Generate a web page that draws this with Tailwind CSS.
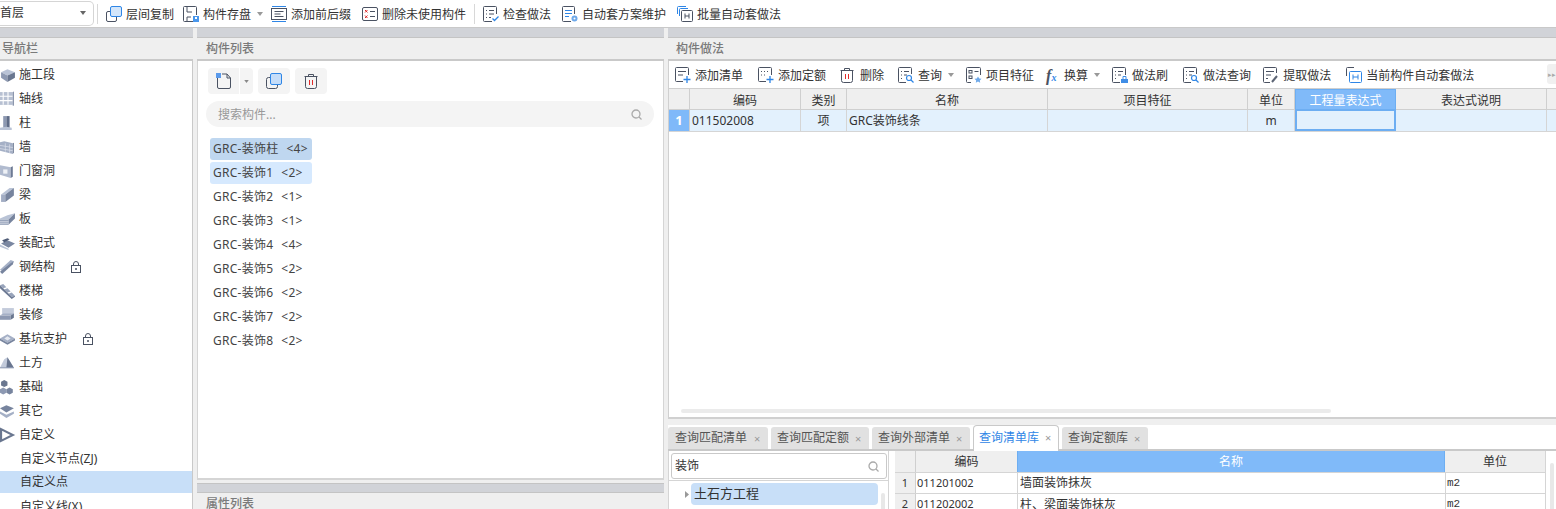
<!DOCTYPE html>
<html lang="zh-CN">
<head>
<meta charset="UTF-8">
<title>构件做法</title>
<script src="https://cdn.jsdelivr.net/npm/@tailwindcss/browser@4"></script>
</head>
<body class="bg-[#efefef] text-[#333] text-[12px] overflow-hidden [font-family:'Noto_Sans','Noto_Sans_CJK_SC',sans-serif]">
<div class="w-[1556px] h-[509px] flex flex-col overflow-hidden">

  <!-- top toolbar -->
  <div class="h-[28px] shrink-0 bg-white flex items-center border-b border-[#c9c9c9] [&>span]:translate-y-px">
    <div class="w-[94px] h-[25px] -mt-px border border-l-0 border-[#d5d5d5] rounded-r-[5px] flex items-center justify-between pr-[7px]">
      <span>首层</span>
      <svg class="w-[6px] h-[4px]" viewBox="0 0 6 4"><path d="M0 0h6L3 4z" fill="#666"/></svg>
    </div>
    <div class="w-px h-[20px] bg-[#d8d8d8] ml-[3px] mr-[8px]"></div>

    <svg class="w-[16px] h-[16px] mr-[4px]" viewBox="0 0 16 16" fill="none"><rect x="0.5" y="5.5" width="10" height="10" rx="1.5" stroke="#4a5262"/><rect x="4.5" y="0.5" width="11" height="10" rx="1.5" fill="#d3e6fb" stroke="#2f86e6"/></svg>
    <span class="mr-[9px]">层间复制</span>
    <svg class="w-[16px] h-[16px] mr-[4px]" viewBox="0 0 16 16" fill="none"><path d="M11 15.500H1.500a1 1 0 0 1-1-1v-13a1 1 0 0 1 1-1h11a1 1 0 0 1 1 1V9" stroke="#4a5262"/><path d="M4 1v5h5M4 15v-4h4" stroke="#4a5262"/><rect x="10" y="10" width="6" height="6" fill="#4a97ec"/><rect x="12" y="11" width="2" height="2" fill="#fff"/></svg>
    <span>构件存盘</span>
    <svg class="w-[6px] h-[4px] ml-[6px] mr-[8px]" viewBox="0 0 6 4"><path d="M0 0h6L3 4z" fill="#999"/></svg>
    <svg class="w-[16px] h-[16px] mr-[4px]" viewBox="0 0 16 16" fill="none"><path d="M1 .5h14M1 15.500h14" stroke="#2f86e6"/><rect x="0.5" y="2.500" width="15" height="11" stroke="#4a5262"/><path d="M3.500 5.500h9M3.500 8h6M3.500 10.500h9" stroke="#4a5262"/></svg>
    <span class="mr-[11px]">添加前后缀</span>
    <svg class="w-[16px] h-[16px] mr-[4px]" viewBox="0 0 16 16" fill="none"><rect x="0.5" y="1.500" width="15" height="13" rx="1.500" stroke="#4a5262"/><path d="M3 4l2.500 2.500M5.500 4L3 6.500M3 9.500l2.500 2.500M5.500 9.500L3 12" stroke="#e02b2b"/><path d="M8 5.500h5M8 10.500h5" stroke="#4a5262"/></svg>
    <span>删除未使用构件</span>
    <div class="w-px h-[20px] bg-[#d8d8d8] ml-[8px] mr-[8px]"></div>

    <svg class="w-[16px] h-[16px] mr-[4px]" viewBox="0 0 16 16" fill="none"><path d="M9 15.500H1.500a1 1 0 0 1-1-1v-13a1 1 0 0 1 1-1h11a1 1 0 0 1 1 1V8" stroke="#4a5262"/><path d="M3 4.500h1M6 4.500h5M3 8h1M6 8h5M3 11.500h1M6 11.500h2" stroke="#4a5262"/><path d="M9.500 12.500l2 2 4-4" stroke="#2f86e6" stroke-width="1.300"/></svg>
    <span class="mr-[11px]">检查做法</span>
    <svg class="w-[16px] h-[16px] mr-[4px]" viewBox="0 0 16 16" fill="none"><path d="M9 15.500H1.500a1 1 0 0 1-1-1v-13a1 1 0 0 1 1-1h10a1 1 0 0 1 1 1V8" stroke="#4a5262"/><path d="M3 4.500h7M3 7.500h7M3 10.500h4" stroke="#2f86e6"/><circle cx="12.500" cy="12.500" r="3" fill="#6ea9ea"/><circle cx="12.500" cy="12.500" r="1" fill="#fff"/></svg>
    <span class="mr-[11px]">自动套方案维护</span>
    <svg class="w-[16px] h-[16px] mr-[4px]" viewBox="0 0 16 16" fill="none"><path d="M.5 8V1.500a1 1 0 0 1 1-1H9M2.500 10V3.500a1 1 0 0 1 1-1H11" stroke="#2f86e6"/><rect x="4.500" y="4.500" width="11" height="11" rx="1" stroke="#4a5262"/><path d="M8 7.500v5M12 7.500v5M8 10h4" stroke="#4a5262"/></svg>
    <span>批量自动套做法</span>
  </div>

  <div class="flex-1 flex min-h-0">

    <!-- nav -->
    <div class="w-[193px] shrink-0 flex flex-col min-h-0">
      <div class="h-[10px] shrink-0 bg-[#d1d3d8] border-b border-[#c4c4c4]"></div>
      <div class="h-[23px] shrink-0 bg-[#efefef] border-b-2 border-[#c9c9c9] flex items-center pl-[2px] text-[#7a7a7a] font-medium">导航栏</div>
      <div class="flex-1 min-h-0 overflow-hidden bg-white border-r border-[#c9c9c9] pt-px">
        <div class="h-6 pt-[2px] flex items-center gap-[3px]"><svg class="w-[16px] h-[16px] shrink-0" viewBox="0 0 15 15"><path d="M1 5l6-3 7 3-7 3z" fill="#b9c3d6"/><path d="M1 5v5l6 4V8z" fill="#8d99b2"/><path d="M14 5v5l-7 4V8z" fill="#69768f"/></svg>施工段</div>
        <div class="h-6 pt-[2px] flex items-center gap-[3px]"><svg class="w-[16px] h-[16px] shrink-0" viewBox="0 0 15 15"><rect x="-1" y="1" width="13" height="12" fill="#b7c0d2"/><path d="M3 1v12M7.500 1v12M-1 5h13M-1 9h13" stroke="#fff"/><path d="M12 1l1-.5v13l-1 .5z" fill="#7a87a1"/></svg>轴线</div>
        <div class="h-6 pt-[2px] flex items-center gap-[3px]"><svg class="w-[16px] h-[16px] shrink-0" viewBox="0 0 15 15"><path d="M3 1h3v11H3z" fill="#8d99b2"/><path d="M6 1h3v11H6z" fill="#5f6c87"/><path d="M0 12l6-1 5 1v2H0z" fill="#b9c3d6"/></svg>柱</div>
        <div class="h-6 pt-[2px] flex items-center gap-[3px]"><svg class="w-[16px] h-[16px] shrink-0" viewBox="0 0 15 15"><path d="M0 3l4-1 8 2v10L0 11z" fill="#a5b0c6"/><path d="M12 4l1-.5V13l-1 1z" fill="#6d7a94"/><path d="M0 6l12 2M0 9l12 2M5 4v8M9 5v8" stroke="#d9deea" stroke-width=".7"/></svg>墙</div>
        <div class="h-6 pt-[2px] flex items-center gap-[3px]"><svg class="w-[16px] h-[16px] shrink-0" viewBox="0 0 15 15"><path d="M0 2l10 2v10L0 11z" fill="#b1bbcf"/><path d="M10 4l2-1v10l-2 1z" fill="#6d7a94"/><rect x="3" y="6" width="4" height="4" fill="#eef1f6"/></svg>门窗洞</div>
        <div class="h-6 pt-[2px] flex items-center gap-[3px]"><svg class="w-[16px] h-[16px] shrink-0" viewBox="0 0 15 15"><path d="M1 7l8-6h4L5 7z" fill="#b9c3d6"/><path d="M1 7h4v7H1z" fill="#a2adc4"/><path d="M5 7l8-6v7l-8 6z" fill="#77849e"/></svg>梁</div>
        <div class="h-6 pt-[2px] flex items-center gap-[3px]"><svg class="w-[16px] h-[16px] shrink-0" viewBox="0 0 15 15"><path d="M0 7l7-3 7-2-6 6H0z" fill="#b9c3d6"/><path d="M0 8h8v5H0z" fill="#98a4bb"/><path d="M8 8l6-6v5l-6 6z" fill="#77849e"/><path d="M0 10h8M0 11.500h8" stroke="#e4e8f0" stroke-width=".6"/></svg>板</div>
        <div class="h-6 pt-[2px] flex items-center gap-[3px]"><svg class="w-[16px] h-[16px] shrink-0" viewBox="0 0 15 15"><path d="M1 8l6-3 7 3-6 4z" fill="#7a87a1"/><path d="M2 5l5-2 2 1-5 3z" fill="#4f5c77"/><path d="M0 9l8 4v1L0 11z" fill="#b9c3d6"/></svg>装配式</div>
        <div class="h-6 pt-[2px] flex items-center gap-[3px]"><svg class="w-[16px] h-[16px] shrink-0" viewBox="0 0 15 15"><path d="M0 10l10-9 3 1L3 12z" fill="#a5b0c6"/><path d="M0 12l10-8 3-2-1 3L2 14z" fill="#77849e"/></svg>钢结构<svg class="w-[10px] h-[12px] ml-[13px]" viewBox="0 0 10 12" fill="none"><rect x=".5" y="4.500" width="9" height="7" stroke="#4a5262"/><path d="M2.500 4.500V3a2.500 2.500 0 0 1 5 0v1.500" stroke="#4a5262"/><circle cx="5" cy="8" r="1" fill="#4a5262"/></svg></div>
        <div class="h-6 pt-[2px] flex items-center gap-[3px]"><svg class="w-[16px] h-[16px] shrink-0" viewBox="0 0 15 15"><path d="M0 2l3-1 3 3-3 1zM4 6l3-1 3 3-3 1zM8 10l3-1 3 3-3 1z" fill="#98a4bb"/><path d="M0 2v3l11 10 3-2v-1l-3 1-8-8z" fill="#6d7a94"/></svg>楼梯</div>
        <div class="h-6 pt-[2px] flex items-center gap-[3px]"><svg class="w-[16px] h-[16px] shrink-0" viewBox="0 0 15 15"><path d="M2 1h11v6H2z" fill="#c3cbdb"/><path d="M0 8l3-2h10l-3 2z" fill="#a5b0c6"/><path d="M0 8h10v4H0z" fill="#8d99b2"/><path d="M10 8l3-2v4l-3 2z" fill="#69768f"/></svg>装修</div>
        <div class="h-6 pt-[2px] flex items-center gap-[3px]"><svg class="w-[16px] h-[16px] shrink-0" viewBox="0 0 15 15"><path d="M0 7l7-4 7 4-7 4z" fill="#a5b0c6"/><path d="M0 7v2l7 4V11zM14 7v2l-7 4V11z" fill="#77849e"/><path d="M4 7l3-2 3 2-3 2z" fill="#e4e8f0"/></svg>基坑支护<svg class="w-[10px] h-[12px] ml-[13px]" viewBox="0 0 10 12" fill="none"><rect x=".5" y="4.500" width="9" height="7" stroke="#4a5262"/><path d="M2.500 4.500V3a2.500 2.500 0 0 1 5 0v1.500" stroke="#4a5262"/><circle cx="5" cy="8" r="1" fill="#4a5262"/></svg></div>
        <div class="h-6 pt-[2px] flex items-center gap-[3px]"><svg class="w-[16px] h-[16px] shrink-0" viewBox="0 0 15 15"><path d="M0 12l4-8 3-2 6 10z" fill="#c3cbdb"/><path d="M6 12l1-10 6 10z" fill="#69768f"/><path d="M0 12h13" stroke="#8d99b2"/></svg>土方</div>
        <div class="h-6 pt-[2px] flex items-center gap-[3px]"><svg class="w-[16px] h-[16px] shrink-0" viewBox="0 0 15 15"><path d="M4 1l3 1.500v3.500l-3 1.500-3-1.500V2.500z" fill="#69768f"/><path d="M3 8l3 1.500V13l-3 1.500L0 13V9.500z" fill="#8d99b2"/><path d="M9 8l3 1.500V13l-3 1.500L6 13V9.500z" fill="#77849e"/></svg>基础</div>
        <div class="h-6 pt-[2px] flex items-center gap-[3px]"><svg class="w-[16px] h-[16px] shrink-0" viewBox="0 0 15 15"><path d="M0 5l6-3 7 3-7 4z" fill="#77849e"/><path d="M0 8l6 3 7-3v2l-7 4-6-4z" fill="#a5b0c6"/></svg>其它</div>
        <div class="h-6 pt-[2px] flex items-center gap-[3px]"><svg class="w-[16px] h-[16px] shrink-0" viewBox="0 0 15 15" fill="none"><path d="M1 2l11 5.500L1 13z" stroke="#69768f" stroke-width="2"/></svg>自定义</div>
        <div class="h-6 pt-[2px] flex items-center pl-[20px]">自定义节点(ZJ)</div>
        <div class="h-[22px] mt-px bg-[#c8dff8] flex items-center pl-[20px]">自定义点</div>
        <div class="h-6 mt-px pt-[2px] flex items-center pl-[20px]">自定义线(X)</div>
      </div>
    </div>

    <div class="w-[4px] shrink-0"></div>

    <!-- component list -->
    <div class="w-[467px] shrink-0 flex flex-col min-h-0">
      <div class="h-[10px] shrink-0 bg-[#d1d3d8] border-b border-[#c4c4c4]"></div>
      <div class="h-[23px] shrink-0 bg-[#efefef] border-b-2 border-[#c9c9c9] flex items-center pl-[9px] text-[#7a7a7a] font-medium">构件列表</div>
      <div class="h-[419px] shrink-0 bg-white border-x border-b-2 border-[#d5d5d5] pl-[8px] pr-[9px] pt-[7px]">
        <div class="flex ml-[2px] gap-[5px]">
          <div class="flex h-[26px] w-[45px] bg-[#f4f4f4] rounded-[4px]">
            <div class="w-[32px] flex items-center justify-center border-r border-white">
              <svg class="w-[16px] h-[16px]" viewBox="0 0 16 16" fill="none"><path d="M1.500 5v9a1.500 1.500 0 0 0 1.500 1.500h10a1.500 1.500 0 0 0 1.500-1.500V5L11 1H6" stroke="#4a5262"/><path d="M11 1v4h3.500" stroke="#4a5262"/><rect x="0" y="0" width="5" height="5" fill="#5b9bec"/></svg>
            </div>
            <div class="flex-1 flex items-center justify-center"><svg class="w-[5px] h-[3px]" viewBox="0 0 6 4"><path d="M0 0h6L3 4z" fill="#888"/></svg></div>
          </div>
          <div class="h-[26px] w-[32px] bg-[#f4f4f4] rounded-[4px] flex items-center justify-center">
            <svg class="w-[16px] h-[16px]" viewBox="0 0 16 16" fill="none"><rect x=".5" y="4.500" width="11" height="11" rx="2" stroke="#4a5262"/><rect x="4.500" y=".5" width="11" height="11" rx="1.500" fill="#c5ddf9" stroke="#2f86e6"/></svg>
          </div>
          <div class="h-[26px] w-[32px] bg-[#f4f4f4] rounded-[4px] flex items-center justify-center">
            <svg class="w-[14px] h-[16px]" viewBox="0 0 14 16" fill="none"><path d="M.5 3.500h13M4.500 3.500V1.500h5v2" stroke="#4a5262"/><path d="M1.500 3.500v10a2 2 0 0 0 2 2h7a2 2 0 0 0 2-2v-10" stroke="#4a5262"/><path d="M5.500 7v5M8.500 7v5" stroke="#e02b2b"/></svg>
          </div>
        </div>
        <div class="mt-[7px] h-[26px] bg-[#f4f4f4] rounded-full flex items-center justify-between pl-[12px] pr-[12px] text-[#999]">
          <span class="translate-y-px">搜索构件...</span>
          <svg class="w-[11px] h-[11px]" viewBox="0 0 11 11" fill="none"><circle cx="5" cy="5" r="4" stroke="#aaa" stroke-width="1.300"/><path d="M8 8l2.500 2.500" stroke="#aaa" stroke-width="1.300"/></svg>
        </div>
        <div class="mt-[11px] ml-[4px] w-[102px] text-[#444] tracking-[0.25px]">
          <div class="h-[22px] mb-[2px] rounded-[3px] bg-[#bfd7f0] flex items-center pl-[3px] whitespace-nowrap">GRC-装饰柱<span class="ml-[8px]">&lt;4&gt;</span></div>
          <div class="h-[22px] mb-[2px] rounded-[3px] bg-[#d6e9fe] flex items-center pl-[3px] whitespace-nowrap">GRC-装饰1<span class="ml-[8px]">&lt;2&gt;</span></div>
          <div class="h-[22px] mb-[2px] flex items-center pl-[3px] whitespace-nowrap">GRC-装饰2<span class="ml-[8px]">&lt;1&gt;</span></div>
          <div class="h-[22px] mb-[2px] flex items-center pl-[3px] whitespace-nowrap">GRC-装饰3<span class="ml-[8px]">&lt;1&gt;</span></div>
          <div class="h-[22px] mb-[2px] flex items-center pl-[3px] whitespace-nowrap">GRC-装饰4<span class="ml-[8px]">&lt;4&gt;</span></div>
          <div class="h-[22px] mb-[2px] flex items-center pl-[3px] whitespace-nowrap">GRC-装饰5<span class="ml-[8px]">&lt;2&gt;</span></div>
          <div class="h-[22px] mb-[2px] flex items-center pl-[3px] whitespace-nowrap">GRC-装饰6<span class="ml-[8px]">&lt;2&gt;</span></div>
          <div class="h-[22px] mb-[2px] flex items-center pl-[3px] whitespace-nowrap">GRC-装饰7<span class="ml-[8px]">&lt;2&gt;</span></div>
          <div class="h-[22px] mb-[2px] flex items-center pl-[3px] whitespace-nowrap">GRC-装饰8<span class="ml-[8px]">&lt;2&gt;</span></div>
        </div>
      </div>
      <div class="h-[3px] shrink-0"></div>
      <div class="h-[10px] shrink-0 bg-[#d1d3d8] border-y border-[#c4c4c4]"></div>
      <div class="h-[22px] shrink-0 flex items-center pl-[9px] text-[#7a7a7a] font-medium">属性列表</div>
    </div>

    <div class="w-[4px] shrink-0"></div>

    <!-- right panel -->
    <div class="flex-1 flex flex-col min-w-0 min-h-0">
      <div class="h-[10px] shrink-0 bg-[#d1d3d8] border-b border-[#c4c4c4]"></div>
      <div class="h-[23px] shrink-0 bg-[#efefef] border-b-2 border-[#c9c9c9] flex items-center pl-[8px] text-[#7a7a7a] font-medium">构件做法</div>

      <div class="h-[358px] shrink-0 bg-white border-l border-b-2 border-[#d0d0d0] relative">
        <div class="h-[27px] flex items-center pl-[6px] relative [&>span]:translate-y-px">
          <svg class="w-[16px] h-[16px] mr-[4px]" viewBox="0 0 16 16" fill="none"><path d="M8 14.500H1.500a1 1 0 0 1-1-1v-12a1 1 0 0 1 1-1h11a1 1 0 0 1 1 1V8" stroke="#4a5262"/><path d="M3 4.500h8M3 8h5" stroke="#4a5262"/><path d="M12 9v7M8.500 12.500h7" stroke="#2f86e6" stroke-width="1.300"/></svg>
          <span class="mr-[15px]">添加清单</span>
          <svg class="w-[16px] h-[16px] mr-[4px]" viewBox="0 0 16 16" fill="none"><path d="M8 14.500H1.500a1 1 0 0 1-1-1v-12a1 1 0 0 1 1-1h11a1 1 0 0 1 1 1V8" stroke="#4a5262"/><path d="M3 4.500h1M6 4.500h1M9 4.500h1M3 8h1M6 8h1" stroke="#4a5262"/><path d="M12 9v7M8.500 12.500h7" stroke="#2f86e6" stroke-width="1.300"/></svg>
          <span class="mr-[14px]">添加定额</span>
          <svg class="w-[14px] h-[16px] mr-[6px]" viewBox="0 0 14 16" fill="none"><path d="M.5 3.500h13M4.500 3.500V1.500h5v2" stroke="#4a5262"/><path d="M1.500 3.500v10a2 2 0 0 0 2 2h7a2 2 0 0 0 2-2v-10" stroke="#4a5262"/><path d="M5.500 7v5M8.500 7v5" stroke="#e02b2b"/></svg>
          <span class="mr-[14px]">删除</span>
          <svg class="w-[16px] h-[16px] mr-[4px]" viewBox="0 0 16 16" fill="none"><path d="M8 15.500H1.500a1 1 0 0 1-1-1v-13a1 1 0 0 1 1-1h11a1 1 0 0 1 1 1V7" stroke="#4a5262"/><path d="M3 4.500h1M6 4.500h5M3 8h1M6 8h3M3 11.500h1" stroke="#4a5262"/><circle cx="11" cy="11" r="2.500" stroke="#2f86e6" stroke-width="1.200"/><path d="M13 13l2.500 2.500" stroke="#2f86e6" stroke-width="1.300"/></svg>
          <span>查询</span>
          <svg class="w-[6px] h-[4px] ml-[6px] mr-[12px]" viewBox="0 0 6 4"><path d="M0 0h6L3 4z" fill="#999"/></svg>
          <svg class="w-[16px] h-[16px] mr-[4px]" viewBox="0 0 16 16" fill="none"><path d="M5 15.500H1.500a1 1 0 0 1-1-1v-13a1 1 0 0 1 1-1h12a1 1 0 0 1 1 1V8" stroke="#4a5262"/><rect x="3" y="3.500" width="3" height="2.500" stroke="#4a5262"/><rect x="3" y="9" width="3" height="2.500" stroke="#4a5262"/><path d="M8.500 4.500h4" stroke="#4a5262"/><path d="M12 9.500l1.200 2 2.300.3-1.700 1.600.4 2.300-2.200-1.100-2.200 1.100.4-2.300-1.700-1.600 2.300-.3z" fill="#6ea9ea"/></svg>
          <span class="mr-[12px]">项目特征</span>
          <span class="w-[14px] mr-[4px] [font-family:'Liberation_Serif',serif] italic font-bold text-[16px] leading-none text-[#4a5262] whitespace-nowrap">f<span class="text-[10px] text-[#2f86e6]">x</span></span>
          <span>换算</span>
          <svg class="w-[6px] h-[4px] ml-[6px] mr-[12px]" viewBox="0 0 6 4"><path d="M0 0h6L3 4z" fill="#999"/></svg>
          <svg class="w-[16px] h-[16px] mr-[4px]" viewBox="0 0 16 16" fill="none"><path d="M8 15.500H1.500a1 1 0 0 1-1-1v-13a1 1 0 0 1 1-1h11a1 1 0 0 1 1 1V8" stroke="#4a5262"/><path d="M3 4.500h1M6 4.500h5M3 8h1M6 8h3M3 11.500h1" stroke="#4a5262"/><path d="M9 12h7v4H9z" fill="#3f8de6"/><path d="M11 12V9.500h3V12" stroke="#3f8de6"/></svg>
          <span class="mr-[15px]">做法刷</span>
          <svg class="w-[16px] h-[16px] mr-[4px]" viewBox="0 0 16 16" fill="none"><path d="M8 15.500H1.500a1 1 0 0 1-1-1v-13a1 1 0 0 1 1-1h11a1 1 0 0 1 1 1V7" stroke="#4a5262"/><path d="M3 4.500h1M6 4.500h5M3 8h1M6 8h3M3 11.500h1" stroke="#4a5262"/><circle cx="11" cy="11" r="2.500" stroke="#2f86e6" stroke-width="1.200"/><path d="M13 13l2.500 2.500" stroke="#2f86e6" stroke-width="1.300"/></svg>
          <span class="mr-[12px]">做法查询</span>
          <svg class="w-[16px] h-[16px] mr-[4px]" viewBox="0 0 16 16" fill="none"><path d="M7 15.500H1.500a1 1 0 0 1-1-1v-13a1 1 0 0 1 1-1h11a1 1 0 0 1 1 1V6" stroke="#4a5262"/><path d="M3 4.500h8M3 8h5M3 11.500h2" stroke="#4a5262"/><path d="M9 15l5-6" stroke="#5c6474" stroke-width="2"/></svg>
          <span class="mr-[15px]">提取做法</span>
          <svg class="w-[16px] h-[16px] mr-[4px]" viewBox="0 0 16 16" fill="none"><path d="M.5 9V1.500a1 1 0 0 1 1-1H8" stroke="#4a5262"/><rect x="3.500" y="4.500" width="12" height="11" rx="1" stroke="#2f86e6"/><path d="M7 7.500v5M12 7.500v5M7 10h5" stroke="#2f86e6"/></svg>
          <span>当前构件自动套做法</span>
          <div class="absolute right-0 top-[3px] w-[9px] h-[20px] rounded-l-[3px] bg-[#f0f0f0] flex items-center justify-center"><span class="text-[7px] text-[#aaa] leading-none">▸▸</span></div>
        </div>

        <div class="grid grid-cols-[21px_111px_46px_201px_200px_47px_101px_151px_1fr] h-[22px] bg-[#efefef] border-y border-[#cfcfcf] text-center [&>div]:pt-[2px]">
          <div class="border-r border-[#cfcfcf]"></div>
          <div class="border-r border-[#cfcfcf] flex items-center justify-center">编码</div>
          <div class="border-r border-[#cfcfcf] flex items-center justify-center">类别</div>
          <div class="border-r border-[#cfcfcf] flex items-center justify-center">名称</div>
          <div class="border-r border-[#cfcfcf] flex items-center justify-center">项目特征</div>
          <div class="border-r border-[#cfcfcf] flex items-center justify-center">单位</div>
          <div class="bg-[#80baf9] text-white border-x border-t border-[#6daef2] flex items-center justify-center">工程量表达式</div>
          <div class="border-r border-[#cfcfcf] flex items-center justify-center">表达式说明</div>
          <div></div>
        </div>
        <div class="grid grid-cols-[21px_111px_46px_201px_200px_47px_101px_151px_1fr] h-[22px] bg-[#e3f1fd] border-b border-[#d5d5d5]">
          <div class="bg-[#7fb9f9] text-white font-bold text-[13px] border-r border-[#cfcfcf] flex items-center justify-center">1</div>
          <div class="border-r border-[#d5d5d5] flex items-center pl-[2px]">011502008</div>
          <div class="border-r border-[#d5d5d5] flex items-center justify-center">项</div>
          <div class="border-r border-[#d5d5d5] flex items-center pl-[2px]">GRC装饰线条</div>
          <div class="border-r border-[#d5d5d5]"></div>
          <div class="border-r border-[#d5d5d5] flex items-center justify-center">m</div>
          <div class="border-2 border-[#6daef2] -mt-px"></div>
          <div class="border-r border-[#d5d5d5]"></div>
          <div></div>
        </div>
        <div class="absolute left-[12px] bottom-[4px] w-[650px] h-[4px] rounded-full bg-[#ebebeb]"></div>
      </div>

      <!-- tabs -->
      <div class="h-[32px] shrink-0 flex items-end bg-white border-b-2 border-[#c9c9c9] relative">
        <div class="absolute inset-x-0 top-0 h-[6px] bg-[#efefef]"></div>
        <div class="relative flex items-end gap-[3px] -mb-[2px]">
          <div class="w-[100px] h-[22px] mb-[2px] bg-[#e1e1e1] rounded-t-[3px] flex items-center pl-[7px] text-[#555]">查询匹配清单<span class="ml-[7px] text-[#999] text-[11px] leading-none">×</span></div>
          <div class="w-[98px] h-[22px] mb-[2px] bg-[#e1e1e1] rounded-t-[3px] flex items-center pl-[6px] text-[#555]">查询匹配定额<span class="ml-[6px] text-[#999] text-[11px] leading-none">×</span></div>
          <div class="w-[98px] h-[22px] mb-[2px] bg-[#e1e1e1] rounded-t-[3px] flex items-center pl-[6px] text-[#555]">查询外部清单<span class="ml-[6px] text-[#999] text-[11px] leading-none">×</span></div>
          <div class="w-[86px] h-[26px] bg-white border-x border-t border-[#c9c9c9] rounded-t-[4px] flex items-center pl-[5px] text-[#2f86e6] pb-[2px]">查询清单库<span class="ml-[6px] text-[#999] text-[11px] leading-none">×</span></div>
          <div class="w-[86px] h-[22px] mb-[2px] bg-[#e1e1e1] rounded-t-[3px] flex items-center pl-[6px] text-[#555]">查询定额库<span class="ml-[6px] text-[#999] text-[11px] leading-none">×</span></div>
        </div>
      </div>

      <!-- query library -->
      <div class="flex-1 flex bg-white min-h-0 relative overflow-hidden">
        <div class="w-[221px] shrink-0 border-x border-[#d5d5d5] relative">
          <div class="h-[26px] mt-[2px] ml-[2px] mr-px border border-[#c9c9c9] rounded-[3px] flex items-center justify-between pl-[3px] pr-[7px]">
            <span>装饰</span>
            <svg class="w-[11px] h-[11px]" viewBox="0 0 11 11" fill="none"><circle cx="5" cy="5" r="4" stroke="#aaa" stroke-width="1.300"/><path d="M8 8l2.500 2.500" stroke="#aaa" stroke-width="1.300"/></svg>
          </div>
          <div class="border-t border-[#d5d5d5] mt-px pt-[2px] pl-[16px] flex items-center">
            <svg class="w-[4px] h-[7px] mr-px" viewBox="0 0 4 7"><path d="M0 0l4 3.500L0 7z" fill="#999"/></svg>
            <div class="w-[187px] h-[22px] ml-[1px] pl-[3px] bg-[#c8dff8] rounded-[4px] flex items-center text-[13px]">土石方工程</div>
          </div>
          <div class="absolute right-[3px] top-[42px] w-[4px] h-[30px] bg-[#e8e8e8] rounded-full"></div>
        </div>
        <div class="w-[6px] shrink-0 bg-white"></div>
        <div class="w-[651px] shrink-0 border-x border-[#d5d5d5]">
          <div class="grid grid-cols-[21px_101px_428px_1fr] h-[22px] bg-[#efefef] border-b border-[#d5d5d5] -ml-px">
            <div class="border-r border-[#cfcfcf]"></div>
            <div class="flex items-center justify-center">编码</div>
            <div class="bg-[#80baf9] border-x border-[#6daef2] text-white flex items-center justify-center">名称</div>
            <div class="flex items-center justify-center">单位</div>
          </div>
          <div class="grid grid-cols-[21px_101px_428px_1fr] h-[21px] border-b border-[#d5d5d5] -ml-px">
            <div class="bg-[#efefef] border-r border-[#cfcfcf] flex items-center justify-center text-[11px]">1</div>
            <div class="flex items-center pl-[1px] text-[11px]">011201002</div>
            <div class="border-l border-[#d5d5d5] flex items-center pl-[2px]">墙面装饰抹灰</div>
            <div class="border-l border-[#d5d5d5] flex items-center pl-[1px] text-[11px] [font-family:'Liberation_Mono',monospace]">m2</div>
          </div>
          <div class="grid grid-cols-[21px_101px_428px_1fr] h-[21px] -ml-px">
            <div class="bg-[#efefef] border-r border-[#cfcfcf] flex items-center justify-center text-[11px]">2</div>
            <div class="flex items-center pl-[1px] text-[11px]">011202002</div>
            <div class="border-l border-[#d5d5d5] flex items-center pl-[2px]">柱、梁面装饰抹灰</div>
            <div class="border-l border-[#d5d5d5] flex items-center pl-[1px] text-[11px] [font-family:'Liberation_Mono',monospace]">m2</div>
          </div>
        </div>
        <div class="absolute right-[2px] top-[12px] bottom-0 w-[4px] bg-[#e8e8e8] rounded-t-full"></div>
      </div>
    </div>
  </div>
</div>
</body>
</html>
